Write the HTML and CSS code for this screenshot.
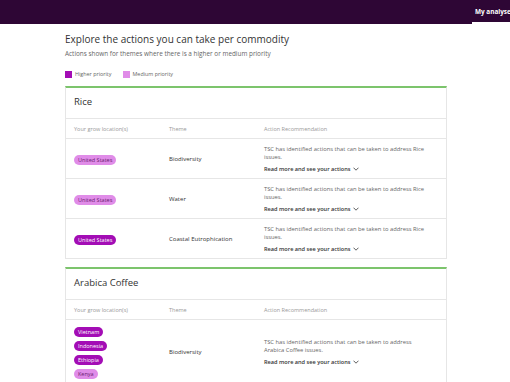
FILE: index.html
```html
<!DOCTYPE html>
<html lang="en">
<head>
    <meta charset="UTF-8">
    <meta name="viewport" content="width=device-width, initial-scale=1.0">
    <title>Actions per commodity</title>
    <link rel="stylesheet" href="styles.css">
</head>
<body>
    <header class="top-bar">
        <nav class="top-nav">
            <a class="nav-tab active" href="#">My analyses</a>
        </nav>
    </header>

    <main class="page">
        <h1 class="page-title">Explore the actions you can take per commodity</h1>
        <p class="page-sub">Actions shown for themes where there is a higher or medium priority</p>

        <div class="legend">
            <span class="legend-item"><span class="swatch high"></span>Higher priority</span>
            <span class="legend-item"><span class="swatch medium"></span>Medium priority</span>
        </div>

        <section class="card">
            <h2 class="card-title">Rice</h2>
            <div class="row head">
                <div class="cell">Your grow location(s)</div>
                <div class="cell">Theme</div>
                <div class="cell">Action Recommendation</div>
            </div>
            <div class="row">
                <div class="cell pills"><span class="pill medium">United States</span></div>
                <div class="cell theme">Biodiversity</div>
                <div class="cell action">
                    <p>TSC has identified actions that can be taken to address Rice issues.</p>
                    <a class="more" href="#">Read more and see your actions <svg width="6" height="4" viewBox="0 0 6 4"><path d="M0.5 0.7 L3 3.2 L5.5 0.7" fill="none" stroke="#333" stroke-width="0.8"/></svg></a>
                </div>
            </div>
            <div class="row">
                <div class="cell pills"><span class="pill medium">United States</span></div>
                <div class="cell theme">Water</div>
                <div class="cell action">
                    <p>TSC has identified actions that can be taken to address Rice issues.</p>
                    <a class="more" href="#">Read more and see your actions <svg width="6" height="4" viewBox="0 0 6 4"><path d="M0.5 0.7 L3 3.2 L5.5 0.7" fill="none" stroke="#333" stroke-width="0.8"/></svg></a>
                </div>
            </div>
            <div class="row">
                <div class="cell pills"><span class="pill high">United States</span></div>
                <div class="cell theme">Coastal Eutrophication</div>
                <div class="cell action">
                    <p>TSC has identified actions that can be taken to address Rice issues.</p>
                    <a class="more" href="#">Read more and see your actions <svg width="6" height="4" viewBox="0 0 6 4"><path d="M0.5 0.7 L3 3.2 L5.5 0.7" fill="none" stroke="#333" stroke-width="0.8"/></svg></a>
                </div>
            </div>
        </section>

        <section class="card">
            <h2 class="card-title">Arabica Coffee</h2>
            <div class="row head">
                <div class="cell">Your grow location(s)</div>
                <div class="cell">Theme</div>
                <div class="cell">Action Recommendation</div>
            </div>
            <div class="row">
                <div class="cell pills">
                    <span class="pill high">Vietnam</span>
                    <span class="pill high">Indonesia</span>
                    <span class="pill high">Ethiopia</span>
                    <span class="pill medium">Kenya</span>
                </div>
                <div class="cell theme">Biodiversity</div>
                <div class="cell action">
                    <p>TSC has identified actions that can be taken to address Arabica Coffee issues.</p>
                    <a class="more" href="#">Read more and see your actions <svg width="6" height="4" viewBox="0 0 6 4"><path d="M0.5 0.7 L3 3.2 L5.5 0.7" fill="none" stroke="#333" stroke-width="0.8"/></svg></a>
                </div>
            </div>
        </section>
    </main>
</body>
</html>
```

FILE: styles.css
```css
body {
    margin: 0;
    font-family: "Open Sans", "Noto Sans", sans-serif;
    color: #333;
    background: #fff;
    overflow: hidden;
}
.top-bar {
    background-color: #2e0635;
    height: 24px;
    display: flex;
    justify-content: flex-end;
}
.top-nav {
    display: flex;
    width: 38px;
    overflow: visible;
}
.nav-tab {
    display: block;
    padding: 7px 0 0 3px;
    height: 15px;
    width: 60px;
    color: #fff;
    font-size: 6.4px;
    font-weight: 700;
    text-decoration: none;
    white-space: nowrap;
    border-bottom: 2px solid #fff;
}
.page {
    width: 382px;
    margin: 0 auto;
    padding-left: 2px;
}
.page-title {
    font-size: 10px;
    font-weight: 400;
    margin: 8px 0 0;
    color: #333;
}
.page-sub {
    font-size: 6.4px;
    color: #666;
    margin: 3px 0 0;
}
.legend {
    display: flex;
    gap: 11px;
    margin-top: 12px;
    font-size: 5.4px;
    color: #666;
}
.legend-item {
    display: flex;
    align-items: center;
    gap: 3px;
}
.swatch {
    width: 7px;
    height: 7px;
    display: inline-block;
}
.swatch.high {
    background-color: #a30db5;
}
.swatch.medium {
    background-color: #e08ce8;
}
.card {
    border: 1px solid #e6e6e6;
    border-top: 2px solid #7cc46c;
    margin-top: 8px;
    margin-bottom: 7px;
}
.card-title {
    font-size: 9.5px;
    font-weight: 400;
    margin: 0;
    padding: 7px 8px 0;
    height: 23px;
    border-bottom: 1px solid #e6e6e6;
}
.row {
    display: grid;
    grid-template-columns: 95px 95px 1fr;
    min-height: 39px;
    border-bottom: 1px solid #e6e6e6;
    align-items: center;
}
.row:last-child {
    border-bottom: none;
}
.row.head {
    min-height: 19px;
    font-size: 5.5px;
    color: #999;
}
.cell {
    padding: 0 8px;
}
.pills {
    display: flex;
    flex-direction: column;
    align-items: flex-start;
    gap: 4px;
    padding-top: 7px;
    padding-bottom: 5px;
}
.pill {
    display: inline-block;
    font-size: 5.5px;
    line-height: 10px;
    padding: 0 4px;
    border-radius: 5px;
}
.pill.high {
    background-color: #a30db5;
    color: #fff;
}
.pill.medium {
    background-color: #e08ce8;
    color: #6a2270;
}
.theme {
    font-size: 6px;
    color: #333;
}
.action {
    font-size: 5.8px;
    color: #666;
    padding-right: 14px;
}
.action p {
    margin: 0;
    line-height: 8px;
}
.more {
    display: inline-flex;
    align-items: center;
    gap: 2px;
    margin-top: 4px;
    font-size: 5.6px;
    color: #333;
    font-weight: 600;
    text-decoration: none;
}
```
